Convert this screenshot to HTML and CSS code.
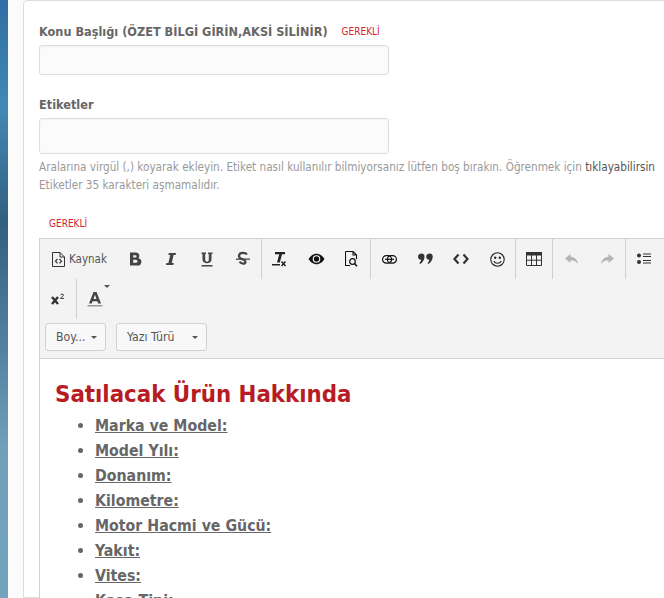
FILE: index.html
```html
<!DOCTYPE html>
<html lang="tr">
<head>
  <meta charset="UTF-8">
  <title>Konu Aç</title>
  <link rel="stylesheet" href="styles.css">
</head>
<body>
  <div class="side-bg"></div>
  <div class="page">
    <div class="panel">
      <div class="field field-title">
        <div class="label-row">
          <label class="label">Konu Başlığı (ÖZET BİLGİ GİRİN,AKSİ SİLİNİR)</label>
          <span class="required">GEREKLİ</span>
        </div>
        <input type="text" class="text-input input-title">
      </div>

      <div class="field field-tags">
        <div class="label-row">
          <label class="label">Etiketler</label>
        </div>
        <input type="text" class="text-input input-tags">
        <p class="hint">Aralarına virgül (,) koyarak ekleyin. Etiket nasıl kullanılır bilmiyorsanız lütfen boş bırakın. Öğrenmek için <a class="hint-link">tıklayabilirsin</a></p>
        <p class="hint">Etiketler 35 karakteri aşmamalıdır.</p>
      </div>

      <div class="required required-editor">GEREKLİ</div>

      <div class="editor">
        <div class="toolbar">
          <div class="tool-row">
            <div class="tool-group">
              <span class="tool tool-source">
                <svg width="13" height="15" viewBox="0 0 13 15"><path d="M.5.5h7.500l4.500 4.500v9.500H.5z M8 .5v4.500h4.500" fill="none" stroke="#333" stroke-width="1"/><path d="M5.500 7l-2 2.200 2 2.200M7.500 7l2 2.200-2 2.200" fill="none" stroke="#333" stroke-width="1.200"/></svg>
                <span class="tool-text">Kaynak</span>
              </span>
              <span class="tool"><svg width="16" height="16" viewBox="0 0 16 16"><path d="M3 1.500h6a3.300 3.300 0 0 1 2.300 5.700A3.500 3.500 0 0 1 10 14.500H3zM6.200 4.200v2.200H8.500a1.100 1.100 0 0 0 0-2.200zM6.200 8.800v3H9a1.500 1.500 0 0 0 0-3z" fill="#444" fill-rule="evenodd"/></svg></span>
              <span class="tool"><svg width="16" height="16" viewBox="0 0 16 16"><path d="M6 2h7l-.4 2h-2l-1.800 8h2l-.4 2H3l.4-2h2l1.800-8h-2z" fill="#444"/></svg></span>
              <span class="tool"><svg width="16" height="16" viewBox="0 0 16 16"><path d="M2.500 1.500h4.500v1.500H6.200v5.500c0 3 3.600 3 3.600 0V3H9V1.500h4.500V3h-1v5.500c0 5-9 5-9 0V3h-1zM2.500 14h11v1.500h-11z" fill="#444"/></svg></span>
              <span class="tool tool-last"><svg width="16" height="16" viewBox="0 0 16 16"><path d="M12 3.500C11 2 9.500 1.800 8 1.800 5.500 1.800 4 3 4 5c0 4 6.500 2.500 6.500 6 0 2.300-4 2.300-6-.3" fill="none" stroke="#444" stroke-width="2.200"/><path d="M1 7.500h14v1.300H1z" fill="#444"/></svg></span>
            </div>
            <div class="tool-group">
              <span class="tool"><svg width="18" height="16" viewBox="0 0 18 16"><path d="M4 1h10v2.200H11L8.800 11.500H6L8.300 3.200H4z" fill="#222"/><path d="M1 13h8v1.500H1z" fill="#222"/><path d="M10.500 10.500l4 4.500M14.500 10.500l-4 4.500" stroke="#222" stroke-width="1.500"/></svg></span>
              <span class="tool"><svg width="17" height="12" viewBox="0 0 17 12"><path d="M.5 6C3 2 6 .8 8.500.8S14 2 16.500 6C14 10 11 11.200 8.500 11.200S3 10 .5 6z" fill="#111"/><circle cx="8.500" cy="6" r="3.800" fill="#fff"/><circle cx="8.500" cy="6" r="2.700" fill="#111"/></svg></span>
              <span class="tool"><svg width="14" height="16" viewBox="0 0 14 16"><path d="M.5.500h7.500l3.500 3.500V8M5 14.500H.5V.5M8 .5V4h3.500" fill="none" stroke="#111" stroke-width="1.100"/><circle cx="7.500" cy="10.500" r="2.800" fill="none" stroke="#111" stroke-width="1.200"/><path d="M9.500 12.500l2.500 2.800" stroke="#111" stroke-width="1.500"/></svg></span>
            </div>
            <div class="tool-group">
              <span class="tool"><svg width="15" height="9" viewBox="0 0 15 9"><rect x=".6" y=".6" width="9" height="7.500" rx="3.700" fill="none" stroke="#111" stroke-width="1.200"/><rect x="5.400" y=".6" width="9" height="7.500" rx="3.700" fill="none" stroke="#111" stroke-width="1.200"/><path d="M3 4.300h9" stroke="#111" stroke-width="1.200"/></svg></span>
              <span class="tool"><svg width="15" height="12" viewBox="0 0 15 12"><path d="M3.300 .5a3 3 0 0 1 3.200 3.200c0 3-2 5.800-4.300 7.300L1.300 10C2.400 9 3 8 3.100 6.800A3.100 3.100 0 0 1 3.300 .5zM11.500 .5a3 3 0 0 1 3.200 3.200c0 3-2 5.800-4.300 7.300L9.500 10c1.100-1 1.700-2 1.800-3.200A3.100 3.100 0 0 1 11.500 .5z" fill="#333"/></svg></span>
              <span class="tool"><svg width="16" height="12" viewBox="0 0 16 12"><path d="M5.500 1.500L1.500 6l4 4.500M10.500 1.500l4 4.500-4 4.500" fill="none" stroke="#333" stroke-width="2.200"/></svg></span>
              <span class="tool tool-last"><svg width="15" height="15" viewBox="0 0 15 15"><circle cx="7.500" cy="7.500" r="6.700" fill="none" stroke="#222" stroke-width="1.100"/><circle cx="5.200" cy="5.700" r="1.200" fill="#222"/><circle cx="9.800" cy="5.700" r="1.200" fill="#222"/><path d="M3.800 9c1.500 3 6 3 7.400 0" fill="none" stroke="#222" stroke-width="1.100"/></svg></span>
            </div>
            <div class="tool-group">
              <span class="tool tool-single"><svg width="16" height="14" viewBox="0 0 16 14"><path d="M0 0h16v3.500H0z" fill="#333"/><path d="M.5 3v10.500h15V3M5.500 3v10.500M10.500 3v10.500M.5 8.200h15" fill="none" stroke="#333" stroke-width="1"/></svg></span>
            </div>
            <div class="tool-group">
              <span class="tool"><svg width="15" height="12" viewBox="0 0 15 12"><path d="M6.500 1L1 5.500 6.500 10V7.300c3 0 5.500.8 7.500 3.700-.5-4-3-7-7.500-7.300z" fill="#b4b4b4"/></svg></span>
              <span class="tool tool-last"><svg width="15" height="12" viewBox="0 0 15 12"><path d="M8.500 1L14 5.500 8.500 10V7.300c-3 0-5.500.8-7.500 3.700.5-4 3-7 7.500-7.300z" fill="#b4b4b4"/></svg></span>
            </div>
            <div class="tool-group tool-group-open">
              <span class="tool"><svg width="14" height="12" viewBox="0 0 14 12"><circle cx="2" cy="2.500" r="2" fill="#333"/><circle cx="2" cy="9" r="2" fill="#333"/><path d="M6 1h8M6 3.500h8M6 7.500h8M6 10h8" stroke="#333" stroke-width="1"/></svg></span>
            </div>
          </div>
          <div class="tool-row">
            <div class="tool-group">
              <span class="tool tool-sup"><svg width="14" height="12" viewBox="0 0 14 12"><path d="M1 4l6 7M7 4l-6 7" stroke="#333" stroke-width="2.400"/><path d="M9.500 2.200c.3-1.500 3-1.500 3 0 0 1-2 1.500-3 3.200h3.500" fill="none" stroke="#333" stroke-width="1"/></svg></span>
            </div>
            <div class="tool-group tool-group-open">
              <span class="tool tool-color">
                <svg width="16" height="16" viewBox="0 0 16 16"><path d="M6.500 1h3L14 12.500h-2.800l-.8-2.200H5.600l-.8 2.200H2zM6.500 8h3L8 3.800z" fill="#444" fill-rule="evenodd"/><path d="M.5 14h15V15.500H.5z" fill="#999"/></svg>
                <span class="caret caret-up"></span>
              </span>
            </div>
          </div>
          <div class="combo-row">
            <span class="combo combo-size">Boy...<span class="caret"></span></span>
            <span class="combo combo-font">Yazı Türü<span class="caret"></span></span>
          </div>
        </div>

        <div class="content">
          <h2 class="content-title">Satılacak Ürün Hakkında</h2>
          <ul class="spec-list">
            <li>Marka ve Model:</li>
            <li>Model Yılı:</li>
            <li>Donanım:</li>
            <li>Kilometre:</li>
            <li>Motor Hacmi ve Gücü:</li>
            <li>Yakıt:</li>
            <li>Vites:</li>
            <li>Kasa Tipi:</li>
          </ul>
        </div>
      </div>
    </div>
  </div>
</body>
</html>
```

FILE: styles.css
```css
html, body {
  height: 100%;
}

body {
  margin: 0;
  display: flex;
  height: 100vh;
  overflow: hidden;
  font-family: "DejaVu Sans", Tahoma, sans-serif;
  font-stretch: condensed;
  color: #666;
  background: #fbfbfb;
}

.side-bg {
  flex: 0 0 8px;
  background: linear-gradient(180deg, #2f6ea3 0%, #4488b5 18%, #31607f 37%, #4d7c9c 55%, #709fba 75%, #72a3bd 100%);
}

.page {
  flex: 1;
  min-width: 0;
  padding-left: 15px;
}

.panel {
  width: 720px;
  height: 100%;
  box-sizing: border-box;
  background: #fff;
  border: 1px solid #ddd;
  border-radius: 4px 0 0 0;
  padding: 22px 15px 0;
}

.label-row {
  display: flex;
  align-items: center;
  height: 16px;
  margin-bottom: 6px;
}

.label {
  font-size: 12.600px;
  font-weight: bold;
  color: #666;
}

.required {
  font-size: 10px;
  color: #d9232e;
}

.label-row .required {
  margin-left: 14px;
}

.text-input {
  display: block;
  box-sizing: border-box;
  width: 350px;
  background: #fbfbfb;
  border: 1px solid #ddd;
  border-radius: 3px;
  box-shadow: inset 0 1px 2px rgba(0, 0, 0, 0.04);
}

.input-title {
  height: 30px;
}

.input-tags {
  height: 36px;
}

.field-tags {
  margin-top: 21px;
}

.hint {
  margin: 0;
  font-size: 11.650px;
  line-height: 18px;
  color: #999;
}

.field-tags .input-tags {
  margin-bottom: 4px;
}

.hint-link {
  color: #555;
}

.required-editor {
  margin: 23px 0 0 10px;
  line-height: 14px;
}

.editor {
  margin-top: 7px;
  border: 1px solid #d1d1d1;
  height: 500px;
}

.toolbar {
  background: #f3f3f3;
  border-bottom: 1px solid #d1d1d1;
  padding: 0 0 7px 5px;
}

.tool-row {
  display: flex;
  height: 40px;
}

.tool-group {
  display: flex;
  align-items: center;
  border-right: 1px solid #d1d1d1;
}

.tool-group-open {
  border-right: 0;
}

.tool {
  display: flex;
  align-items: center;
  justify-content: center;
  width: 36px;
}

.tool-source {
  width: 72px;
  justify-content: flex-start;
  padding-left: 7px;
  box-sizing: border-box;
  gap: 4px;
}

.tool-text {
  font-size: 11.500px;
  color: #555;
}

.tool-sup {
  width: 31px;
  box-sizing: border-box;
  padding-right: 5px;
}

.tool-color {
  position: relative;
}

.caret {
  display: inline-block;
  width: 0;
  height: 0;
  border-left: 3px solid transparent;
  border-right: 3px solid transparent;
  border-top: 3px solid #555;
}

.caret-up {
  position: absolute;
  top: -6px;
  right: 3px;
}

.combo-row {
  display: flex;
  gap: 10px;
  padding-top: 4px;
}

.combo {
  display: flex;
  align-items: center;
  justify-content: space-between;
  box-sizing: border-box;
  height: 28px;
  padding: 0 8px 0 10px;
  background: #f8f8f8;
  border: 1px solid #d1d1d1;
  border-radius: 3px;
  font-size: 12.200px;
  color: #555;
}

.combo-size {
  width: 61px;
}

.combo-font {
  width: 91px;
}

.content {
  padding: 20px 15px;
  background: #fff;
}

.content-title {
  margin: 0 0 4px;
  font-size: 23.750px;
  line-height: 30px;
  font-weight: bold;
  color: #b71c24;
}

.spec-list {
  margin: 0;
  padding-left: 40px;
}

.spec-list li {
  font-size: 15.750px;
  line-height: 25px;
  font-weight: bold;
  text-decoration: underline;
  color: #666;
}
```
